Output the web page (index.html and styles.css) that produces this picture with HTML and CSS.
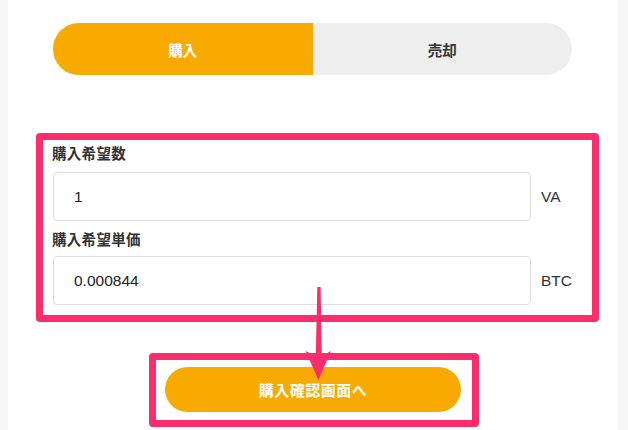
FILE: index.html
```html
<!DOCTYPE html>
<html lang="ja">
<head>
<meta charset="utf-8">
<link rel="stylesheet" href="styles.css">
</head>
<body>
<div class="page">
  <div class="toggle">
    <div class="tab tab-active">購入</div>
    <div class="tab">売却</div>
  </div>

  <div class="highlight form-box">
    <div class="field-label">購入希望数</div>
    <div class="field-row">
      <div class="input">1</div>
      <div class="unit">VA</div>
    </div>
    <div class="field-label label-second">購入希望単価</div>
    <div class="field-row">
      <div class="input">0.000844</div>
      <div class="unit">BTC</div>
    </div>
  </div>

  <div class="highlight button-box">
    <div class="confirm-btn">購入確認画面へ</div>
  </div>

  <svg class="arrow" width="628" height="430" viewBox="0 0 628 430">
    <polygon points="317.3,287 320.6,287 321.8,356 315.8,356" fill="#fb2d6c"/>
    <path d="M305.5,351 Q312,354.5 318.5,357 Q325,354.5 331,351 L318.5,380 Z" fill="#fb2d6c"/>
  </svg>
</div>
</body>
</html>
```

FILE: styles.css
```css
html, body {
  margin: 0;
  padding: 0;
  background: #f6f6f6;
}

body {
  font-family: "Noto Sans CJK JP", "Liberation Sans", sans-serif;
  color: #333333;
}

.page {
  position: relative;
  width: 610px;
  height: 430px;
  margin-left: 8px;
  background: #ffffff;
  padding-top: 23px;
  box-sizing: border-box;
  overflow: hidden;
}

.toggle {
  display: flex;
  margin: 0 46px 0 45px;
  height: 52px;
  border-radius: 26px;
  overflow: hidden;
  background: #eeeeee;
}

.tab {
  flex: 1;
  display: flex;
  align-items: center;
  justify-content: center;
  font-size: 14.5px;
  font-weight: 700;
  color: #333333;
}

.tab-active {
  background: #f8aa00;
  color: #ffffff;
}

.highlight {
  border: 7px solid #fb2d6c;
  border-radius: 4px;
}

.form-box {
  margin: 58px 19px 0 28px;
  padding: 3px 0 10px 9px;
}

.field-label {
  height: 20px;
  line-height: 20px;
  font-size: 14.5px;
  font-weight: 700;
  color: #333333;
  letter-spacing: 0.3px;
}

.label-second {
  margin-top: 8px;
}

.field-row {
  display: flex;
  align-items: center;
  margin-top: 9px;
}

.label-second + .field-row {
  margin-top: 7px;
}

.input {
  width: 478px;
  height: 49px;
  box-sizing: border-box;
  border: 1px solid #dddddd;
  border-radius: 4px;
  padding-left: 20px;
  display: flex;
  align-items: center;
  font-family: "Liberation Sans", sans-serif;
  font-size: 15.5px;
  color: #222222;
  margin-left: 1px;
}

.unit {
  margin-left: 10px;
  font-family: "Liberation Sans", sans-serif;
  font-size: 15.5px;
  color: #333333;
}

.button-box {
  margin: 31px 0 0 141px;
  width: 330px;
  height: 74px;
  box-sizing: border-box;
  padding: 7px 11px 8px 9px;
}

.confirm-btn {
  height: 45px;
  border-radius: 23px;
  background: #f8aa00;
  color: #ffffff;
  font-size: 15px;
  font-weight: 700;
  display: flex;
  align-items: center;
  justify-content: center;
  letter-spacing: 0.5px;
}

.arrow {
  position: absolute;
  left: -8px;
  top: 0;
}
```
